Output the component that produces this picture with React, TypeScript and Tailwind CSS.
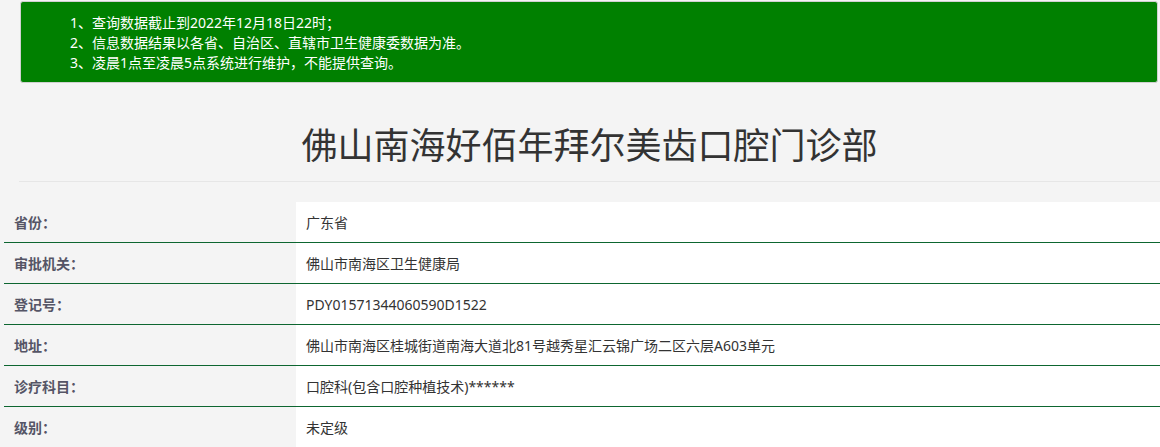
import React from "react";

const FONT = { fontFamily: '"Noto Sans", "Noto Sans CJK SC", sans-serif' };

const NOTICES = [
  "1、查询数据截止到2022年12月18日22时；",
  "2、信息数据结果以各省、自治区、直辖市卫生健康委数据为准。",
  "3、凌晨1点至凌晨5点系统进行维护，不能提供查询。",
];

const ROWS: [string, string][] = [
  ["省份：", "广东省"],
  ["审批机关：", "佛山市南海区卫生健康局"],
  ["登记号：", "PDY01571344060590D1522"],
  ["地址：", "佛山市南海区桂城街道南海大道北81号越秀星汇云锦广场二区六层A603单元"],
  ["诊疗科目：", "口腔科(包含口腔种植技术)******"],
  ["级别：", "未定级"],
];

export default function App() {
  return (
    <div className="min-h-screen bg-[#f4f4f4] overflow-hidden" style={FONT}>
      {/* notice box */}
      <div className="pl-5 pr-[2px] pt-[1px]">
        <div className="h-[82px] bg-[#008000] border border-[#d0d0d0] rounded-[3px] pl-[49px] pt-[11px] text-white text-[14px] leading-[20px]">
          {NOTICES.map(n => (
            <div key={n}>{n}</div>
          ))}
        </div>
      </div>

      {/* title */}
      <div className="ml-[19px] border-b border-[#e6e6e6] mt-[42px] pb-[15px]">
        <h1 className="text-center text-[36px] leading-[41px] text-[#333]">
          佛山南海好佰年拜尔美齿口腔门诊部
        </h1>
      </div>

      {/* details */}
      <div className="ml-1 mt-5">
        {ROWS.map(([label, value]) => (
          <div key={label} className="flex h-[41px] border-b border-[#0d6630]">
            <div className="w-[292px] shrink-0 flex items-center pl-[10px] text-[14px] font-bold text-[#555566]">
              {label}
            </div>
            <div className="flex-1 bg-white flex items-center pl-[10px] text-[14px] text-[#333]">
              {value}
            </div>
          </div>
        ))}
      </div>
    </div>
  );
}
